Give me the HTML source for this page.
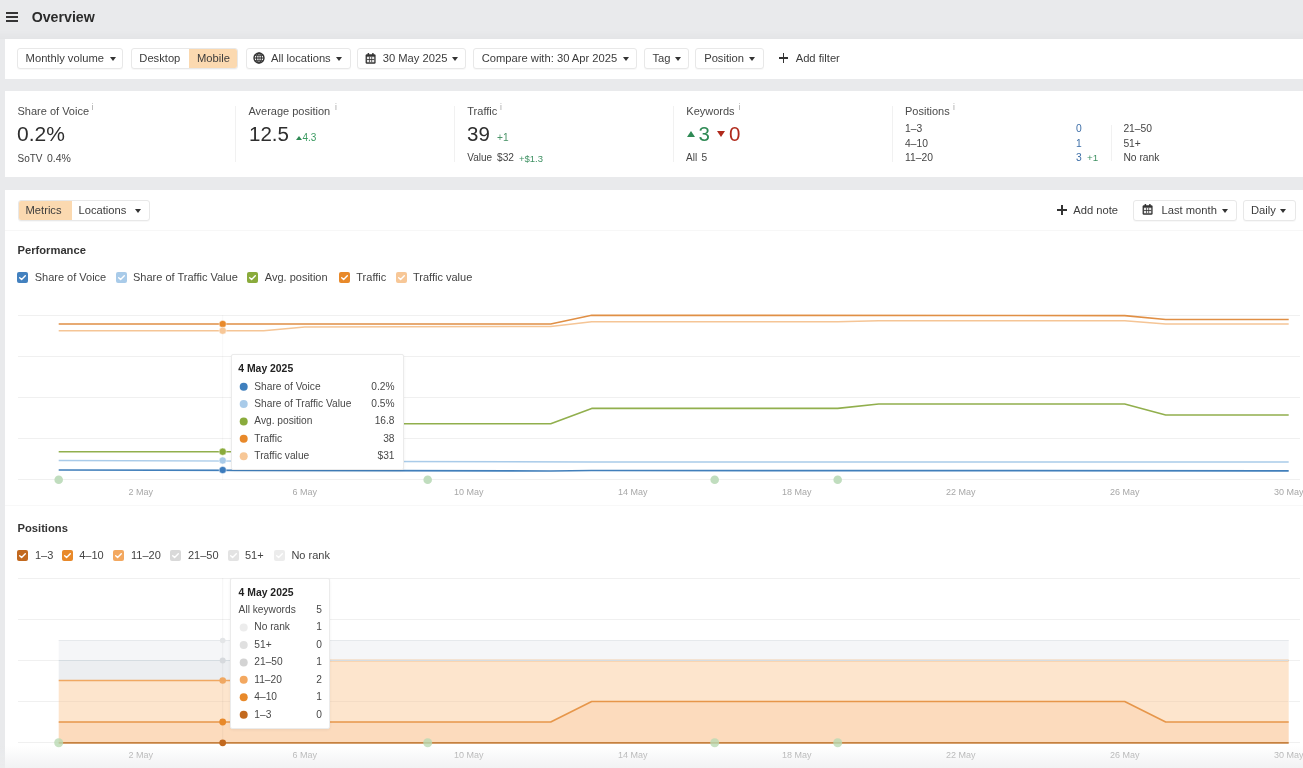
<!DOCTYPE html>
<html><head><meta charset="utf-8">
<style>
html,body{margin:0;padding:0;}
body{width:1303px;height:768px;overflow:hidden;position:relative;background:#e9eaec;font-family:"Liberation Sans",sans-serif;color:#333;}
.t{position:absolute;white-space:nowrap;line-height:1;}
.card{position:absolute;background:#fff;}
.btn{position:absolute;top:48px;height:19px;border:1px solid #e8e8e8;border-radius:3px;background:#fff;box-shadow:0 1px 1px rgba(0,0,0,0.03);}
.caret{position:absolute;width:0;height:0;border-left:3px solid transparent;border-right:3px solid transparent;border-top:4px solid #333;}
.ft{font-size:11.2px;color:#3c3c3c;}
.st{font-size:11px;color:#4a4a4a;}
.sv{font-size:20.5px;color:#2e2e2e;}
.ss{font-size:10px;color:#444;}
.sup{font-size:8.5px;color:#a8a8a8;}
.div{position:absolute;width:1px;background:#f1f1f1;}
.cb{position:absolute;width:11px;height:11px;border-radius:2px;}
.cb svg{position:absolute;left:0;top:0;}
.lg{font-size:11px;color:#444;}
.ax{font-size:9px;color:#a5a5a5;}
</style></head><body><div id="wrap" style="position:absolute;left:0;top:0;width:1303px;height:768px;will-change:transform;">

<!-- header -->
<div style="position:absolute;left:6px;top:12.2px;width:11.6px;height:1.8px;background:#353535;"></div>
<div style="position:absolute;left:6px;top:16.2px;width:11.6px;height:1.8px;background:#353535;"></div>
<div style="position:absolute;left:6px;top:20.2px;width:11.6px;height:1.8px;background:#353535;"></div>
<div class="t" style="left:31.7px;top:10.3px;font-size:14.2px;font-weight:bold;color:#2b2b2b;">Overview</div>

<!-- filter bar -->
<div style="position:absolute;left:0;top:30px;width:1303px;height:9px;background:linear-gradient(rgba(0,0,0,0),rgba(0,0,0,0.018));"></div>
<div class="card" style="left:5px;top:39px;width:1298px;height:40px;"></div>
<div class="btn" style="left:17.2px;width:104.3px;"></div>
<div class="t ft" style="left:25.6px;top:53.1px;">Monthly volume</div>
<div class="caret" style="left:109.5px;top:56.5px;"></div>

<div class="btn" style="left:130.5px;width:105px;overflow:hidden;"><div style="position:absolute;left:57px;top:0;width:50px;height:19px;background:#fbd9b0;"></div></div>
<div class="t ft" style="left:139.3px;top:53.1px;">Desktop</div>
<div class="t ft" style="left:197px;top:53.1px;">Mobile</div>

<div class="btn" style="left:245.5px;width:103px;"></div>
<svg style="position:absolute;left:253px;top:52.4px" width="12" height="12" viewBox="0 0 12 12"><circle cx="6" cy="6" r="5" fill="none" stroke="#333" stroke-width="1.4"/><ellipse cx="6" cy="6" rx="2.4" ry="5" fill="none" stroke="#333" stroke-width="1.1"/><line x1="6" y1="1" x2="6" y2="11" stroke="#333" stroke-width="0.9"/><line x1="1" y1="6" x2="11" y2="6" stroke="#333" stroke-width="1.1"/><line x1="1.5" y1="3.2" x2="10.5" y2="3.2" stroke="#333" stroke-width="1"/><line x1="1.5" y1="8.8" x2="10.5" y2="8.8" stroke="#333" stroke-width="1"/></svg>
<div class="t ft" style="left:271px;top:53.1px;">All locations</div>
<div class="caret" style="left:335.5px;top:56.5px;"></div>

<div class="btn" style="left:357px;width:107px;"></div>
<svg style="position:absolute;left:365px;top:52.5px" width="11" height="11" viewBox="0 0 11 11"><rect x="0.6" y="1.3" width="10" height="9.4" rx="1.3" fill="#333"/><rect x="2.6" y="0" width="1.5" height="2.5" rx="0.5" fill="#333"/><rect x="7.1" y="0" width="1.5" height="2.5" rx="0.5" fill="#333"/><rect x="1.9" y="3.7" width="7.4" height="5.6" fill="#e6e6e6"/><g fill="#333"><rect x="1.9" y="6.2" width="7.4" height="0.8"/><rect x="4.1" y="3.7" width="0.7" height="5.6"/><rect x="6.4" y="3.7" width="0.7" height="5.6"/></g></svg>
<div class="t ft" style="left:382.7px;top:53.1px;">30 May 2025</div>
<div class="caret" style="left:452px;top:56.5px;"></div>

<div class="btn" style="left:473px;width:162px;"></div>
<div class="t ft" style="left:481.7px;top:53.1px;">Compare with: 30 Apr 2025</div>
<div class="caret" style="left:623px;top:56.5px;"></div>

<div class="btn" style="left:644px;width:42.5px;"></div>
<div class="t ft" style="left:652.5px;top:53.1px;">Tag</div>
<div class="caret" style="left:674.5px;top:56.5px;"></div>

<div class="btn" style="left:695px;width:66.5px;"></div>
<div class="t ft" style="left:704.2px;top:53.1px;">Position</div>
<div class="caret" style="left:749px;top:56.5px;"></div>

<div style="position:absolute;left:778.8px;top:57.4px;width:9.6px;height:1.6px;background:#333;"></div>
<div style="position:absolute;left:782.8px;top:53.4px;width:1.6px;height:9.6px;background:#333;"></div>
<div class="t ft" style="left:795.7px;top:53.1px;">Add filter</div>

<!-- stats card -->
<div class="card" style="left:5px;top:91px;width:1298px;height:86px;"></div>
<div class="t st" style="left:17.5px;top:105.7px;">Share of Voice</div>
<div class="t sup" style="left:91.5px;top:103px;">i</div>
<div class="t sv" style="left:17px;top:123.4px;font-size:21px;">0.2%</div>
<div class="t ss" style="left:17.5px;top:153.8px;">SoTV</div><div class="t ss" style="left:47px;top:153.1px;font-size:10.5px;">0.4%</div>
<div class="div" style="left:235px;top:106px;height:56px;"></div>

<div class="t st" style="left:248.4px;top:105.7px;">Average position</div>
<div class="t sup" style="left:335px;top:103px;">i</div>
<div class="t sv" style="left:249px;top:123.9px;">12.5</div>
<div style="position:absolute;left:296px;top:136px;width:0;height:0;border-left:3px solid transparent;border-right:3px solid transparent;border-bottom:4px solid #2f8a55;"></div>
<div class="t" style="left:302.5px;top:132.5px;font-size:10px;color:#3a9a60;">4.3</div>
<div class="div" style="left:454px;top:106px;height:56px;"></div>

<div class="t st" style="left:467.3px;top:105.7px;">Traffic</div>
<div class="t sup" style="left:500px;top:103px;">i</div>
<div class="t sv" style="left:467px;top:123.9px;">39</div>
<div class="t" style="left:497px;top:133.1px;font-size:10.2px;color:#4a9468;">+1</div>
<div class="t ss" style="left:467.3px;top:153.4px;">Value</div><div class="t ss" style="left:497px;top:153.4px;font-size:10.2px;">$32</div>
<div class="t" style="left:519px;top:153.6px;font-size:9.5px;color:#3f9163;">+$1.3</div>
<div class="div" style="left:673px;top:106px;height:56px;"></div>

<div class="t st" style="left:686.3px;top:105.7px;">Keywords</div>
<div class="t sup" style="left:738.5px;top:103px;">i</div>
<div style="position:absolute;left:686.5px;top:130.5px;width:0;height:0;border-left:4.5px solid transparent;border-right:4.5px solid transparent;border-bottom:6px solid #2f8a55;"></div>
<div class="t sv" style="left:698.5px;top:123.9px;color:#2f8a55;">3</div>
<div style="position:absolute;left:717.3px;top:131.2px;width:0;height:0;border-left:4.5px solid transparent;border-right:4.5px solid transparent;border-top:6px solid #b02a1c;"></div>
<div class="t sv" style="left:729px;top:123.9px;color:#b02a1c;">0</div>
<div class="t ss" style="left:686px;top:153.2px;">All</div><div class="t ss" style="left:701.5px;top:153.2px;font-size:10.2px;">5</div>
<div class="div" style="left:891.5px;top:106px;height:56px;"></div>

<div class="t st" style="left:905px;top:105.7px;">Positions</div>
<div class="t sup" style="left:953px;top:103px;">i</div>
<div class="t" style="left:905px;top:124.2px;font-size:10.3px;color:#444;">1–3</div>
<div class="t" style="left:905px;top:138.7px;font-size:10.3px;color:#444;">4–10</div>
<div class="t" style="left:905px;top:153.2px;font-size:10.3px;color:#444;">11–20</div>
<div class="t" style="left:1076px;top:124.2px;font-size:10.3px;color:#3e6fa8;">0</div>
<div class="t" style="left:1076px;top:138.7px;font-size:10.3px;color:#3e6fa8;">1</div>
<div class="t" style="left:1076px;top:153.2px;font-size:10.3px;color:#3e6fa8;">3</div>
<div class="t" style="left:1087px;top:153.4px;font-size:9.8px;color:#3f9163;">+1</div>
<div class="div" style="left:1111px;top:125px;height:36px;"></div>
<div class="t" style="left:1123.4px;top:124.2px;font-size:10.3px;color:#444;">21–50</div>
<div class="t" style="left:1123.4px;top:138.7px;font-size:10.3px;color:#444;">51+</div>
<div class="t" style="left:1123.4px;top:153.2px;font-size:10.3px;color:#444;">No rank</div>

<!-- main card -->
<div class="card" style="left:5px;top:190px;width:1298px;height:578px;"></div>

<div class="btn" style="left:17.5px;top:200px;width:130.5px;overflow:hidden;"><div style="position:absolute;left:0;top:0;width:53px;height:19px;background:#fbd9b0;"></div></div>
<div class="t ft" style="left:25.5px;top:204.8px;">Metrics</div>
<div class="t ft" style="left:78.5px;top:204.8px;">Locations</div>
<div class="caret" style="left:134.5px;top:208.5px;"></div>

<div style="position:absolute;left:1057px;top:209.2px;width:9.5px;height:1.6px;background:#333;"></div>
<div style="position:absolute;left:1060.95px;top:205.2px;width:1.6px;height:9.5px;background:#333;"></div>
<div class="t ft" style="left:1073.3px;top:204.8px;">Add note</div>

<div class="btn" style="left:1133px;top:200.3px;width:102px;height:18.3px;"></div>
<svg style="position:absolute;left:1142px;top:204px" width="11" height="11" viewBox="0 0 11 11"><rect x="0.6" y="1.3" width="10" height="9.4" rx="1.3" fill="#333"/><rect x="2.6" y="0" width="1.5" height="2.5" rx="0.5" fill="#333"/><rect x="7.1" y="0" width="1.5" height="2.5" rx="0.5" fill="#333"/><rect x="1.9" y="3.7" width="7.4" height="5.6" fill="#e6e6e6"/><g fill="#333"><rect x="1.9" y="6.2" width="7.4" height="0.8"/><rect x="4.1" y="3.7" width="0.7" height="5.6"/><rect x="6.4" y="3.7" width="0.7" height="5.6"/></g></svg>
<div class="t ft" style="left:1161.5px;top:204.8px;">Last month</div>
<div class="caret" style="left:1222px;top:208.5px;"></div>

<div class="btn" style="left:1243px;top:200.3px;width:50.5px;height:18.3px;"></div>
<div class="t ft" style="left:1251px;top:204.8px;">Daily</div>
<div class="caret" style="left:1280px;top:208.5px;"></div>

<div style="position:absolute;left:5px;top:230px;width:1298px;height:1px;background:#f7f7f7;"></div>

<div class="t" style="left:17.5px;top:245.3px;font-size:11.2px;font-weight:bold;color:#333;">Performance</div>

<!-- chart svg placeholder -->
<svg id="charts" style="position:absolute;left:0;top:0" width="1303" height="768" font-family="Liberation Sans, sans-serif">
<line x1="18" y1="315.5" x2="1300" y2="315.5" stroke="#f0f0f0" stroke-width="1"/>
<line x1="18" y1="356.5" x2="1300" y2="356.5" stroke="#f0f0f0" stroke-width="1"/>
<line x1="18" y1="397.5" x2="1300" y2="397.5" stroke="#f0f0f0" stroke-width="1"/>
<line x1="18" y1="438.5" x2="1300" y2="438.5" stroke="#f0f0f0" stroke-width="1"/>
<line x1="18" y1="479.5" x2="1300" y2="479.5" stroke="#f0f0f0" stroke-width="1"/>
<polyline points="58.7,330.7 263.7,330.7 304.7,326.9 550.7,326.5 591.7,321.8 837.7,321.8 878.7,320.8 1124.7,320.8 1165.7,324.0 1288.7,324.0" fill="none" stroke="#f5c596" stroke-width="1.5" stroke-linejoin="round"/>
<polyline points="58.7,324.0 550.7,324.0 591.7,315.3 1124.7,315.6 1165.7,319.5 1288.7,319.5" fill="none" stroke="#e08f45" stroke-width="1.6" stroke-linejoin="round"/>
<polyline points="58.7,460.5 386.7,461.5 591.7,462.0 1288.7,462.0" fill="none" stroke="#a9cbe9" stroke-width="1.4" stroke-linejoin="round"/>
<polyline points="58.7,451.7 263.7,451.7 304.7,423.7 550.7,423.7 591.7,408.4 837.7,408.4 878.7,404.0 1124.7,404.0 1165.7,415.0 1288.7,415.0" fill="none" stroke="#91af4d" stroke-width="1.6" stroke-linejoin="round"/>
<polyline points="58.7,470.0 550.7,471.0 591.7,470.5 1288.7,470.8" fill="none" stroke="#417fbb" stroke-width="1.7" stroke-linejoin="round"/>
<line x1="222.7" y1="315" x2="222.7" y2="480" stroke="rgba(0,0,0,0.03)" stroke-width="1"/>
<circle cx="222.7" cy="324" r="3.6" fill="#e8892a" stroke="rgba(255,255,255,0.6)" stroke-width="0.8"/>
<circle cx="222.7" cy="330.7" r="3.6" fill="#f7c797" stroke="rgba(255,255,255,0.6)" stroke-width="0.8"/>
<circle cx="222.7" cy="451.7" r="3.6" fill="#8aab3c" stroke="rgba(255,255,255,0.6)" stroke-width="0.8"/>
<circle cx="222.7" cy="460.5" r="3.6" fill="#a9cbe9" stroke="rgba(255,255,255,0.6)" stroke-width="0.8"/>
<circle cx="222.7" cy="470" r="3.6" fill="#3d7cbd" stroke="rgba(255,255,255,0.6)" stroke-width="0.8"/>
<circle cx="58.7" cy="479.7" r="4.3" fill="#c0ddbe"/>
<circle cx="427.7" cy="479.7" r="4.3" fill="#c0ddbe"/>
<circle cx="714.7" cy="479.7" r="4.3" fill="#c0ddbe"/>
<circle cx="837.7" cy="479.7" r="4.3" fill="#c0ddbe"/>
<text x="140.7" y="494.7" text-anchor="middle" font-size="9" fill="#a8a8a8">2 May</text>
<text x="304.7" y="494.7" text-anchor="middle" font-size="9" fill="#a8a8a8">6 May</text>
<text x="468.7" y="494.7" text-anchor="middle" font-size="9" fill="#a8a8a8">10 May</text>
<text x="632.7" y="494.7" text-anchor="middle" font-size="9" fill="#a8a8a8">14 May</text>
<text x="796.7" y="494.7" text-anchor="middle" font-size="9" fill="#a8a8a8">18 May</text>
<text x="960.7" y="494.7" text-anchor="middle" font-size="9" fill="#a8a8a8">22 May</text>
<text x="1124.7" y="494.7" text-anchor="middle" font-size="9" fill="#a8a8a8">26 May</text>
<text x="1288.7" y="494.7" text-anchor="middle" font-size="9" fill="#a8a8a8">30 May</text>
<line x1="18" y1="578.5" x2="1300" y2="578.5" stroke="#f0f0f0" stroke-width="1"/>
<line x1="18" y1="619.5" x2="1300" y2="619.5" stroke="#f0f0f0" stroke-width="1"/>
<line x1="18" y1="660.5" x2="1300" y2="660.5" stroke="#f0f0f0" stroke-width="1"/>
<line x1="18" y1="701.5" x2="1300" y2="701.5" stroke="#f0f0f0" stroke-width="1"/>
<line x1="18" y1="742.5" x2="1300" y2="742.5" stroke="#f0f0f0" stroke-width="1"/>
<polygon points="58.7,640.5 99.7,640.5 140.7,640.5 181.7,640.5 222.7,640.5 263.7,640.5 304.7,640.5 345.7,640.5 386.7,640.5 427.7,640.5 468.7,640.5 509.7,640.5 550.7,640.5 591.7,640.5 632.7,640.5 673.7,640.5 714.7,640.5 755.7,640.5 796.7,640.5 837.7,640.5 878.7,640.5 919.7,640.5 960.7,640.5 1001.7,640.5 1042.7,640.5 1083.7,640.5 1124.7,640.5 1165.7,640.5 1206.7,640.5 1247.7,640.5 1288.7,640.5 1288.7,660.5 1247.7,660.5 1206.7,660.5 1165.7,660.5 1124.7,660.5 1083.7,660.5 1042.7,660.5 1001.7,660.5 960.7,660.5 919.7,660.5 878.7,660.5 837.7,660.5 796.7,660.5 755.7,660.5 714.7,660.5 673.7,660.5 632.7,660.5 591.7,660.5 550.7,660.5 509.7,660.5 468.7,660.5 427.7,660.5 386.7,660.5 345.7,660.5 304.7,660.5 263.7,660.5 222.7,660.5 181.7,660.5 140.7,660.5 99.7,660.5 58.7,660.5" fill="#f5f6f8"/>
<polygon points="58.7,660.5 99.7,660.5 140.7,660.5 181.7,660.5 222.7,660.5 263.7,660.5 304.7,660.5 345.7,660.5 386.7,660.5 427.7,660.5 468.7,660.5 509.7,660.5 550.7,660.5 591.7,660.5 632.7,660.5 673.7,660.5 714.7,660.5 755.7,660.5 796.7,660.5 837.7,660.5 878.7,660.5 919.7,660.5 960.7,660.5 1001.7,660.5 1042.7,660.5 1083.7,660.5 1124.7,660.5 1165.7,660.5 1206.7,660.5 1247.7,660.5 1288.7,660.5 1288.7,660.5 1247.7,660.5 1206.7,660.5 1165.7,660.5 1124.7,660.5 1083.7,660.5 1042.7,660.5 1001.7,660.5 960.7,660.5 919.7,660.5 878.7,660.5 837.7,660.5 796.7,660.5 755.7,660.5 714.7,660.5 673.7,660.5 632.7,660.5 591.7,660.5 550.7,660.5 509.7,660.5 468.7,660.5 427.7,660.5 386.7,660.5 345.7,660.5 304.7,660.5 263.7,680.5 222.7,680.5 181.7,680.5 140.7,680.5 99.7,680.5 58.7,680.5" fill="#eceef1"/>
<polygon points="58.7,680.5 99.7,680.5 140.7,680.5 181.7,680.5 222.7,680.5 263.7,680.5 304.7,660.5 345.7,660.5 386.7,660.5 427.7,660.5 468.7,660.5 509.7,660.5 550.7,660.5 591.7,660.5 632.7,660.5 673.7,660.5 714.7,660.5 755.7,660.5 796.7,660.5 837.7,660.5 878.7,660.5 919.7,660.5 960.7,660.5 1001.7,660.5 1042.7,660.5 1083.7,660.5 1124.7,660.5 1165.7,660.5 1206.7,660.5 1247.7,660.5 1288.7,660.5 1288.7,722.0 1247.7,722.0 1206.7,722.0 1165.7,722.0 1124.7,701.5 1083.7,701.5 1042.7,701.5 1001.7,701.5 960.7,701.5 919.7,701.5 878.7,701.5 837.7,701.5 796.7,701.5 755.7,701.5 714.7,701.5 673.7,701.5 632.7,701.5 591.7,701.5 550.7,722.0 509.7,722.0 468.7,722.0 427.7,722.0 386.7,722.0 345.7,722.0 304.7,722.0 263.7,722.0 222.7,722.0 181.7,722.0 140.7,722.0 99.7,722.0 58.7,722.0" fill="#fde5cd"/>
<polygon points="58.7,722.0 99.7,722.0 140.7,722.0 181.7,722.0 222.7,722.0 263.7,722.0 304.7,722.0 345.7,722.0 386.7,722.0 427.7,722.0 468.7,722.0 509.7,722.0 550.7,722.0 591.7,701.5 632.7,701.5 673.7,701.5 714.7,701.5 755.7,701.5 796.7,701.5 837.7,701.5 878.7,701.5 919.7,701.5 960.7,701.5 1001.7,701.5 1042.7,701.5 1083.7,701.5 1124.7,701.5 1165.7,722.0 1206.7,722.0 1247.7,722.0 1288.7,722.0 1288.7,742.8 1247.7,742.8 1206.7,742.8 1165.7,742.8 1124.7,742.8 1083.7,742.8 1042.7,742.8 1001.7,742.8 960.7,742.8 919.7,742.8 878.7,742.8 837.7,742.8 796.7,742.8 755.7,742.8 714.7,742.8 673.7,742.8 632.7,742.8 591.7,742.8 550.7,742.8 509.7,742.8 468.7,742.8 427.7,742.8 386.7,742.8 345.7,742.8 304.7,742.8 263.7,742.8 222.7,742.8 181.7,742.8 140.7,742.8 99.7,742.8 58.7,742.8" fill="#fcdbbd"/>
<line x1="58.7" y1="701.5" x2="1288" y2="701.5" stroke="rgba(0,0,0,0.035)" stroke-width="1"/>
<polyline points="58.7,742.8 99.7,742.8 140.7,742.8 181.7,742.8 222.7,742.8 263.7,742.8 304.7,742.8 345.7,742.8 386.7,742.8 427.7,742.8 468.7,742.8 509.7,742.8 550.7,742.8 591.7,742.8 632.7,742.8 673.7,742.8 714.7,742.8 755.7,742.8 796.7,742.8 837.7,742.8 878.7,742.8 919.7,742.8 960.7,742.8 1001.7,742.8 1042.7,742.8 1083.7,742.8 1124.7,742.8 1165.7,742.8 1206.7,742.8 1247.7,742.8 1288.7,742.8" fill="none" stroke="#c6813f" stroke-width="1.8" stroke-linejoin="round"/>
<polyline points="58.7,722.0 99.7,722.0 140.7,722.0 181.7,722.0 222.7,722.0 263.7,722.0 304.7,722.0 345.7,722.0 386.7,722.0 427.7,722.0 468.7,722.0 509.7,722.0 550.7,722.0 591.7,701.5 632.7,701.5 673.7,701.5 714.7,701.5 755.7,701.5 796.7,701.5 837.7,701.5 878.7,701.5 919.7,701.5 960.7,701.5 1001.7,701.5 1042.7,701.5 1083.7,701.5 1124.7,701.5 1165.7,722.0 1206.7,722.0 1247.7,722.0 1288.7,722.0" fill="none" stroke="#e6964a" stroke-width="1.6" stroke-linejoin="round"/>
<polyline points="58.7,680.5 99.7,680.5 140.7,680.5 181.7,680.5 222.7,680.5 263.7,680.5 304.7,660.5 345.7,660.5 386.7,660.5 427.7,660.5 468.7,660.5 509.7,660.5 550.7,660.5 591.7,660.5 632.7,660.5 673.7,660.5 714.7,660.5 755.7,660.5 796.7,660.5 837.7,660.5 878.7,660.5 919.7,660.5 960.7,660.5 1001.7,660.5 1042.7,660.5 1083.7,660.5 1124.7,660.5 1165.7,660.5 1206.7,660.5 1247.7,660.5 1288.7,660.5" fill="none" stroke="#f0a862" stroke-width="1.4" stroke-linejoin="round"/>
<polyline points="58.7,660.5 99.7,660.5 140.7,660.5 181.7,660.5 222.7,660.5 263.7,660.5 304.7,660.5 345.7,660.5 386.7,660.5 427.7,660.5 468.7,660.5 509.7,660.5 550.7,660.5 591.7,660.5 632.7,660.5 673.7,660.5 714.7,660.5 755.7,660.5 796.7,660.5 837.7,660.5 878.7,660.5 919.7,660.5 960.7,660.5 1001.7,660.5 1042.7,660.5 1083.7,660.5 1124.7,660.5 1165.7,660.5 1206.7,660.5 1247.7,660.5 1288.7,660.5" fill="none" stroke="#d5dce1" stroke-width="1.2" stroke-linejoin="round"/>
<polyline points="58.7,640.5 99.7,640.5 140.7,640.5 181.7,640.5 222.7,640.5 263.7,640.5 304.7,640.5 345.7,640.5 386.7,640.5 427.7,640.5 468.7,640.5 509.7,640.5 550.7,640.5 591.7,640.5 632.7,640.5 673.7,640.5 714.7,640.5 755.7,640.5 796.7,640.5 837.7,640.5 878.7,640.5 919.7,640.5 960.7,640.5 1001.7,640.5 1042.7,640.5 1083.7,640.5 1124.7,640.5 1165.7,640.5 1206.7,640.5 1247.7,640.5 1288.7,640.5" fill="none" stroke="#e6e9ec" stroke-width="1.1" stroke-linejoin="round"/>
<line x1="222.7" y1="578" x2="222.7" y2="743" stroke="rgba(0,0,0,0.045)" stroke-width="1"/>
<circle cx="222.7" cy="640.5" r="2.8" fill="#e3e5e7"/>
<circle cx="222.7" cy="660.5" r="3" fill="#d6d9dd"/>
<circle cx="222.7" cy="680.5" r="3.3" fill="#f0a862"/>
<circle cx="222.7" cy="722" r="3.4" fill="#e8892a"/>
<circle cx="222.7" cy="742.8" r="3.4" fill="#c2691f"/>
<circle cx="58.7" cy="742.8" r="4.5" fill="#b9d9b3" opacity="0.8"/>
<circle cx="427.7" cy="742.8" r="4.5" fill="#b9d9b3" opacity="0.8"/>
<circle cx="714.7" cy="742.8" r="4.5" fill="#b9d9b3" opacity="0.8"/>
<circle cx="837.7" cy="742.8" r="4.5" fill="#b9d9b3" opacity="0.8"/>
<text x="140.7" y="757.5" text-anchor="middle" font-size="9" fill="#a8a8a8">2 May</text>
<text x="304.7" y="757.5" text-anchor="middle" font-size="9" fill="#a8a8a8">6 May</text>
<text x="468.7" y="757.5" text-anchor="middle" font-size="9" fill="#a8a8a8">10 May</text>
<text x="632.7" y="757.5" text-anchor="middle" font-size="9" fill="#a8a8a8">14 May</text>
<text x="796.7" y="757.5" text-anchor="middle" font-size="9" fill="#a8a8a8">18 May</text>
<text x="960.7" y="757.5" text-anchor="middle" font-size="9" fill="#a8a8a8">22 May</text>
<text x="1124.7" y="757.5" text-anchor="middle" font-size="9" fill="#a8a8a8">26 May</text>
<text x="1288.7" y="757.5" text-anchor="middle" font-size="9" fill="#a8a8a8">30 May</text>
</svg>

<!--EXTRA-->
<div class="cb" style="left:17.0px;top:272px;background:#4381bf;"><svg width="11" height="11" viewBox="0 0 11 11"><path d="M2.7 5.7 L4.6 7.5 L8.3 3.7" fill="none" stroke="#fff" stroke-width="1.4" stroke-linecap="round" stroke-linejoin="round"/></svg></div>
<div class="t lg" style="left:34.7px;top:271.94px;">Share of Voice</div>
<div class="cb" style="left:115.5px;top:272px;background:#a9cbe9;"><svg width="11" height="11" viewBox="0 0 11 11"><path d="M2.7 5.7 L4.6 7.5 L8.3 3.7" fill="none" stroke="#fff" stroke-width="1.4" stroke-linecap="round" stroke-linejoin="round"/></svg></div>
<div class="t lg" style="left:133px;top:271.94px;">Share of Traffic Value</div>
<div class="cb" style="left:247.2px;top:272px;background:#8aab3c;"><svg width="11" height="11" viewBox="0 0 11 11"><path d="M2.7 5.7 L4.6 7.5 L8.3 3.7" fill="none" stroke="#fff" stroke-width="1.4" stroke-linecap="round" stroke-linejoin="round"/></svg></div>
<div class="t lg" style="left:264.8px;top:271.94px;">Avg. position</div>
<div class="cb" style="left:338.5px;top:272px;background:#e8892a;"><svg width="11" height="11" viewBox="0 0 11 11"><path d="M2.7 5.7 L4.6 7.5 L8.3 3.7" fill="none" stroke="#fff" stroke-width="1.4" stroke-linecap="round" stroke-linejoin="round"/></svg></div>
<div class="t lg" style="left:356.3px;top:271.94px;">Traffic</div>
<div class="cb" style="left:395.7px;top:272px;background:#f7c797;"><svg width="11" height="11" viewBox="0 0 11 11"><path d="M2.7 5.7 L4.6 7.5 L8.3 3.7" fill="none" stroke="#fff" stroke-width="1.4" stroke-linecap="round" stroke-linejoin="round"/></svg></div>
<div class="t lg" style="left:413px;top:271.94px;">Traffic value</div>
<div style="position:absolute;left:5px;top:505px;width:1298px;height:1px;background:#f8f8f8;"></div>
<div class="t" style="left:17.5px;top:523.1px;font-size:11.2px;font-weight:bold;color:#333;">Positions</div>
<div class="cb" style="left:17.0px;top:549.5px;background:#c2691f;"><svg width="11" height="11" viewBox="0 0 11 11"><path d="M2.7 5.7 L4.6 7.5 L8.3 3.7" fill="none" stroke="#fff" stroke-width="1.4" stroke-linecap="round" stroke-linejoin="round"/></svg></div>
<div class="t lg" style="left:34.9px;top:549.59px;">1–3</div>
<div class="cb" style="left:61.8px;top:549.5px;background:#e8892a;"><svg width="11" height="11" viewBox="0 0 11 11"><path d="M2.7 5.7 L4.6 7.5 L8.3 3.7" fill="none" stroke="#fff" stroke-width="1.4" stroke-linecap="round" stroke-linejoin="round"/></svg></div>
<div class="t lg" style="left:79.2px;top:549.59px;">4–10</div>
<div class="cb" style="left:112.8px;top:549.5px;background:#f3a860;"><svg width="11" height="11" viewBox="0 0 11 11"><path d="M2.7 5.7 L4.6 7.5 L8.3 3.7" fill="none" stroke="#fff" stroke-width="1.4" stroke-linecap="round" stroke-linejoin="round"/></svg></div>
<div class="t lg" style="left:131px;top:549.59px;">11–20</div>
<div class="cb" style="left:170.1px;top:549.5px;background:#d9d9d9;"><svg width="11" height="11" viewBox="0 0 11 11"><path d="M2.7 5.7 L4.6 7.5 L8.3 3.7" fill="none" stroke="#fff" stroke-width="1.4" stroke-linecap="round" stroke-linejoin="round"/></svg></div>
<div class="t lg" style="left:188px;top:549.59px;">21–50</div>
<div class="cb" style="left:227.8px;top:549.5px;background:#e3e3e3;"><svg width="11" height="11" viewBox="0 0 11 11"><path d="M2.7 5.7 L4.6 7.5 L8.3 3.7" fill="none" stroke="#fff" stroke-width="1.4" stroke-linecap="round" stroke-linejoin="round"/></svg></div>
<div class="t lg" style="left:245px;top:549.59px;">51+</div>
<div class="cb" style="left:273.5px;top:549.5px;background:#ececec;"><svg width="11" height="11" viewBox="0 0 11 11"><path d="M2.7 5.7 L4.6 7.5 L8.3 3.7" fill="none" stroke="#fff" stroke-width="1.4" stroke-linecap="round" stroke-linejoin="round"/></svg></div>
<div class="t lg" style="left:291.4px;top:549.59px;">No rank</div>
<div style="position:absolute;left:231px;top:354px;width:171px;height:114px;background:#fff;border:1px solid #ebebeb;border-radius:2px;box-shadow:0 1px 3px rgba(0,0,0,0.06);"></div>
<div class="t" style="left:238.3px;top:364.00px;font-size:10.4px;font-weight:bold;color:#222;">4 May 2025</div>
<svg style="position:absolute;left:238px;top:381px" width="12" height="12"><circle cx="5.7" cy="5.65" r="4" fill="#3f7fbd"/></svg>
<div class="t" style="left:254.3px;top:381.57px;font-size:10.2px;color:#484848;">Share of Voice</div>
<div class="t" style="right:908.50px;top:381.57px;font-size:10.2px;color:#484848;">0.2%</div>
<svg style="position:absolute;left:238px;top:399px" width="12" height="12"><circle cx="5.7" cy="5.05" r="4" fill="#a9cbe9"/></svg>
<div class="t" style="left:254.3px;top:398.97px;font-size:10.2px;color:#484848;">Share of Traffic Value</div>
<div class="t" style="right:908.50px;top:398.97px;font-size:10.2px;color:#484848;">0.5%</div>
<svg style="position:absolute;left:238px;top:416px" width="12" height="12"><circle cx="5.7" cy="5.45" r="4" fill="#8aab3c"/></svg>
<div class="t" style="left:254.3px;top:416.37px;font-size:10.2px;color:#484848;">Avg. position</div>
<div class="t" style="right:908.50px;top:416.37px;font-size:10.2px;color:#484848;">16.8</div>
<svg style="position:absolute;left:238px;top:433px" width="12" height="12"><circle cx="5.7" cy="5.85" r="4" fill="#e8892a"/></svg>
<div class="t" style="left:254.3px;top:433.77px;font-size:10.2px;color:#484848;">Traffic</div>
<div class="t" style="right:908.50px;top:433.77px;font-size:10.2px;color:#484848;">38</div>
<svg style="position:absolute;left:238px;top:451px" width="12" height="12"><circle cx="5.7" cy="5.25" r="4" fill="#f7c797"/></svg>
<div class="t" style="left:254.3px;top:451.17px;font-size:10.2px;color:#484848;">Traffic value</div>
<div class="t" style="right:908.50px;top:451.17px;font-size:10.2px;color:#484848;">$31</div>
<div style="position:absolute;left:230.4px;top:577.5px;width:98px;height:149px;background:#fff;border:1px solid #ebebeb;border-radius:2px;box-shadow:0 1px 3px rgba(0,0,0,0.06);"></div>
<div class="t" style="left:238.6px;top:588.00px;font-size:10.4px;font-weight:bold;color:#222;">4 May 2025</div>
<div class="t" style="left:238.6px;top:604.97px;font-size:10.2px;color:#484848;">All keywords</div>
<div class="t" style="right:981.00px;top:604.97px;font-size:10.2px;color:#484848;">5</div>
<svg style="position:absolute;left:238px;top:622px" width="12" height="12"><circle cx="5.7" cy="5.45" r="4" fill="#ececec"/></svg>
<div class="t" style="left:254.3px;top:622.37px;font-size:10.2px;color:#484848;">No rank</div>
<div class="t" style="right:981.00px;top:622.37px;font-size:10.2px;color:#484848;">1</div>
<svg style="position:absolute;left:238px;top:639px" width="12" height="12"><circle cx="5.7" cy="5.92" r="4" fill="#e0e0e0"/></svg>
<div class="t" style="left:254.3px;top:639.84px;font-size:10.2px;color:#484848;">51+</div>
<div class="t" style="right:981.00px;top:639.84px;font-size:10.2px;color:#484848;">0</div>
<svg style="position:absolute;left:238px;top:657px" width="12" height="12"><circle cx="5.7" cy="5.39" r="4" fill="#d3d3d3"/></svg>
<div class="t" style="left:254.3px;top:657.31px;font-size:10.2px;color:#484848;">21–50</div>
<div class="t" style="right:981.00px;top:657.31px;font-size:10.2px;color:#484848;">1</div>
<svg style="position:absolute;left:238px;top:674px" width="12" height="12"><circle cx="5.7" cy="5.86" r="4" fill="#f3a860"/></svg>
<div class="t" style="left:254.3px;top:674.78px;font-size:10.2px;color:#484848;">11–20</div>
<div class="t" style="right:981.00px;top:674.78px;font-size:10.2px;color:#484848;">2</div>
<svg style="position:absolute;left:238px;top:692px" width="12" height="12"><circle cx="5.7" cy="5.33" r="4" fill="#e8892a"/></svg>
<div class="t" style="left:254.3px;top:692.25px;font-size:10.2px;color:#484848;">4–10</div>
<div class="t" style="right:981.00px;top:692.25px;font-size:10.2px;color:#484848;">1</div>
<svg style="position:absolute;left:238px;top:709px" width="12" height="12"><circle cx="5.7" cy="5.80" r="4" fill="#c2691f"/></svg>
<div class="t" style="left:254.3px;top:709.72px;font-size:10.2px;color:#484848;">1–3</div>
<div class="t" style="right:981.00px;top:709.72px;font-size:10.2px;color:#484848;">0</div>
<div style="position:absolute;left:0;top:746px;width:1303px;height:22px;background:linear-gradient(rgba(240,241,242,0),rgba(236,237,238,0.7));"></div>
<!--/EXTRA--></div></body></html>
